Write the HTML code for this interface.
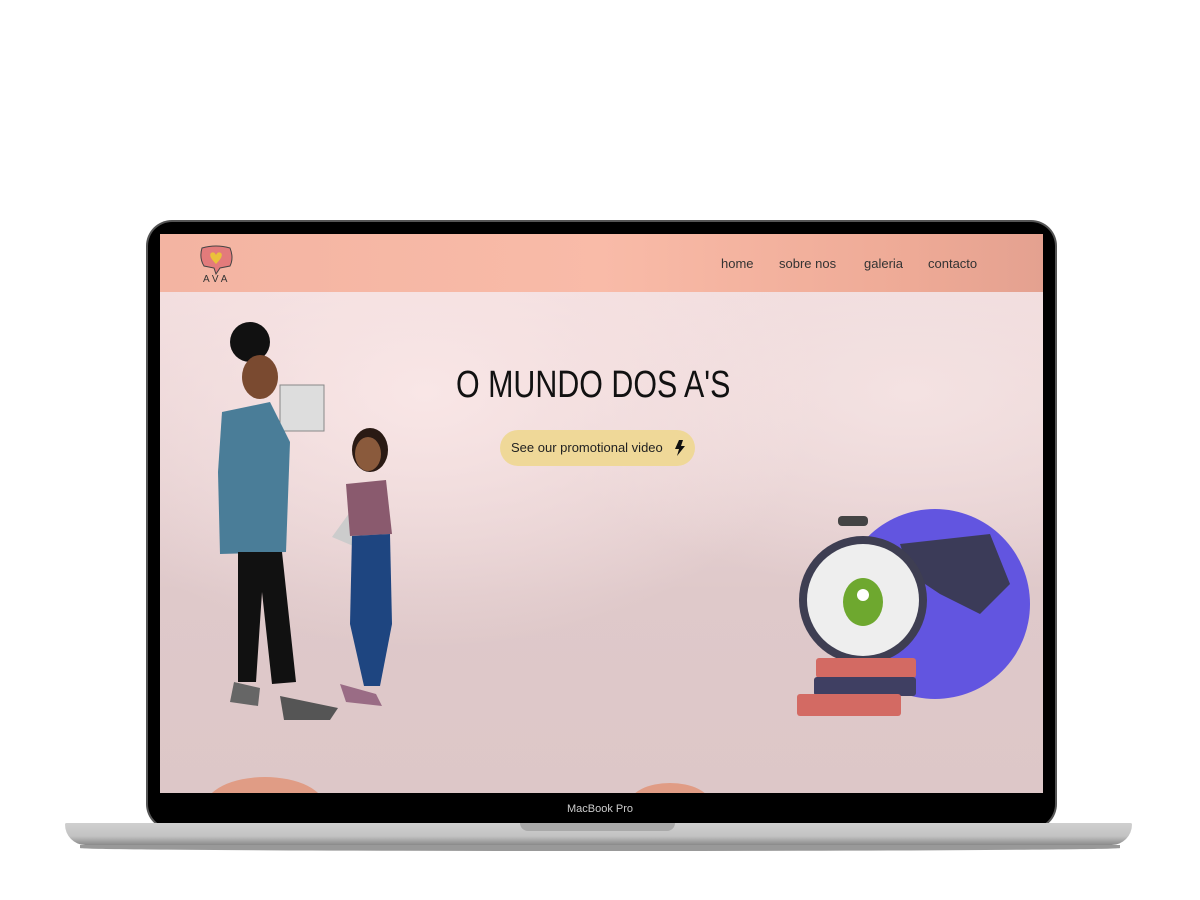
<!DOCTYPE html>
<html><head><style>
body{margin:0;width:1200px;height:900px;background:#fff;position:relative;overflow:hidden;font-family:"Liberation Sans",sans-serif}
.abs{position:absolute}
#bezel{left:148px;top:222px;width:907px;height:606px;background:#000;border-radius:24px;box-shadow:0 0 0 2px #555}
#screen{left:160px;top:234px;width:883px;height:559px;overflow:hidden;background:#e2cccd}
#hdr{left:0;top:0;width:883px;height:58px;background:linear-gradient(90deg,#f3b4a2,#f9bba8 50%,#eeaa96 85%,#e4a190)}
.nav{top:22px;font-family:"Comic Sans MS","Liberation Sans",sans-serif;font-size:13px;color:#333}
#base{left:65px;top:823px;width:1067px;height:22px;background:linear-gradient(#d0d0d0,#c2c2c2 60%,#8a8a8a);border-radius:3px 3px 40px 40px}
</style></head><body>
<div class="abs" id="bezel"></div>
<div class="abs" id="screen">
 <div class="abs" style="left:0;top:58px;width:883px;height:501px;background:radial-gradient(ellipse at 30% 20%,#f9e6e6,transparent 45%),radial-gradient(ellipse at 85% 20%,#f4e2e2,transparent 35%),linear-gradient(#f1dcdd,#dfc9ca 60%,#ddc7c8)"></div>
 <div class="abs" id="hdr"></div>
 <svg class="abs" style="left:36px;top:10px" width="44" height="40"><path d="M6 4 Q20 0 34 4 Q38 14 34 22 L24 24 L20 30 L18 24 L8 22 Q3 14 6 4Z" fill="#e37b7b" stroke="#444"/><path d="M20 20 Q12 12 15 9 Q18 7 20 11 Q22 7 25 9 Q28 12 20 20Z" fill="#eac23a"/><text x="7" y="38" font-size="10" fill="#333">A V A</text></svg>
 <div class="abs nav" style="left:561px">home</div>
 <div class="abs nav" style="left:619px">sobre nos</div>
 <div class="abs nav" style="left:704px">galeria</div>
 <div class="abs nav" style="left:768px">contacto</div>
 <div class="abs" style="left:296px;top:130px;font-family:'Comic Sans MS','Liberation Sans',sans-serif;font-size:38px;color:#111;transform:scaleX(0.8);transform-origin:0 0;white-space:nowrap">O MUNDO DOS A'S</div>
 <div class="abs" style="left:340px;top:196px;width:195px;height:36px;border-radius:18px;background:#efd898;font-family:'Comic Sans MS','Liberation Sans',sans-serif;font-size:13px;line-height:36px;color:#222;text-indent:11px">See our promotional video</div>
 <svg class="abs" style="left:514px;top:206px" width="12" height="16"><path d="M5 0 L1 9 L5 9 L3 16 L11 6 L7 6 L9 0Z" fill="#111"/></svg>
 <!-- woman -->
 <svg class="abs" style="left:50px;top:88px" width="190" height="410">
  <circle cx="40" cy="20" r="20" fill="#111"/><ellipse cx="50" cy="55" rx="18" ry="22" fill="#7a4a30"/>
  <rect x="70" y="63" width="44" height="46" fill="#ddd" stroke="#888"/>
  <path d="M12 90 L60 80 L80 120 L76 230 L10 232 L8 150Z" fill="#4a7d98"/>
  <path d="M28 230 L72 230 L86 360 L62 362 L52 270 L46 360 L28 360Z" fill="#111"/>
  <path d="M24 360 L50 366 L48 384 L20 380Z" fill="#666"/><path d="M70 374 L128 386 L120 398 L74 398Z" fill="#555"/>
  <path d="M122 215 L140 190 L148 226 Z" fill="#ccc"/>
 </svg>
 <!-- girl -->
 <svg class="abs" style="left:160px;top:190px" width="80" height="290">
  <ellipse cx="50" cy="26" rx="18" ry="22" fill="#2a1a14"/><ellipse cx="48" cy="30" rx="13" ry="17" fill="#8a5a3c"/>
  <path d="M26 60 L66 56 L72 110 L30 112Z" fill="#8a5a6e"/>
  <path d="M32 112 L70 110 L72 200 L60 262 L44 262 L30 200Z" fill="#1e4580"/>
  <path d="M20 260 L56 270 L62 282 L26 278Z" fill="#9a6c85"/>
 </svg>
 <!-- globe/clock -->
 <svg class="abs" style="left:630px;top:270px" width="240" height="230">
  <circle cx="145" cy="100" r="95" fill="#6255e0"/>
  <path d="M110 40 L200 30 L220 80 L190 110 L150 90 L120 70Z" fill="#3b3b58"/>
  <rect x="48" y="12" width="30" height="10" rx="4" fill="#444"/>
  <circle cx="73" cy="96" r="64" fill="#3e3e52"/><circle cx="73" cy="96" r="56" fill="#eee"/>
  <ellipse cx="73" cy="98" rx="20" ry="24" fill="#6ea82f"/><circle cx="73" cy="91" r="6" fill="#fff"/>
  <rect x="26" y="154" width="100" height="20" rx="3" fill="#d36a63"/>
  <rect x="24" y="173" width="102" height="19" rx="3" fill="#3f3f62"/>
  <rect x="7" y="190" width="104" height="22" rx="3" fill="#d36a63"/>
 </svg>
 <div class="abs" style="left:45px;top:543px;width:120px;height:60px;border-radius:50%;background:#e09c85"></div>
 <div class="abs" style="left:470px;top:549px;width:80px;height:40px;border-radius:50%;background:#e09c85"></div>
</div>
<div class="abs" style="left:0;top:803px;width:1200px;text-align:center;color:#ccc;font-size:11px">MacBook Pro</div>
<div class="abs" id="base"></div>
<div class="abs" style="left:520px;top:823px;width:155px;height:8px;background:#a9a9a9;border-radius:0 0 8px 8px"></div>
<div class="abs" style="left:80px;top:845px;width:1040px;height:6px;background:#333;border-radius:0 0 50% 50%;opacity:.5"></div>
</body></html>
